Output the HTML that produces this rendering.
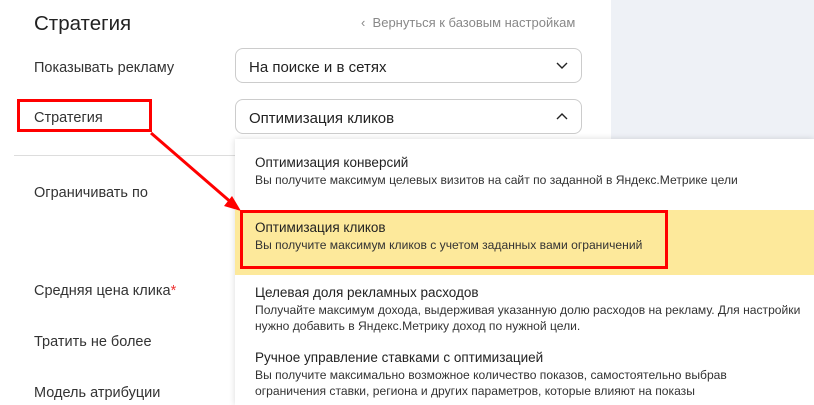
<!DOCTYPE html>
<html><head><meta charset="utf-8"><style>
*{margin:0;padding:0;box-sizing:border-box}
body{width:814px;height:405px;overflow:hidden;background:#fff;font-family:"Liberation Sans","DejaVu Sans",sans-serif;color:#222;position:relative}
.a{position:absolute;white-space:nowrap}
.lbl{font-size:14.5px;color:#333}
.sel{position:absolute;left:235px;width:347px;height:35px;border:1px solid #ccc;border-radius:8px;font-size:15px;padding:10px 0 0 13px;color:#222}
.it{position:absolute;left:255px;font-size:13.5px;color:#222}
.ds{position:absolute;left:255px;font-size:12.1px;color:#333;line-height:16px}
</style></head><body>
<div class="a" style="left:611px;top:0;width:203px;height:139px;background:#eef1f6"></div>
<div class="a" style="left:34px;top:12px;font-size:20.5px;color:#222">Стратегия</div>
<div class="a" style="left:361px;top:15px;font-size:13px;color:#888">‹&nbsp;&nbsp;Вернуться к базовым настройкам</div>
<div class="a lbl" style="left:34px;top:60px">Показывать рекламу</div>
<div class="sel" style="top:48px">На поиске и в сетях
<svg class="a" style="left:320px;top:13px" width="12" height="8"><path d="M1 1l5 5 5-5" stroke="#222" stroke-width="1.4" fill="none"/></svg></div>
<div class="a lbl" style="left:34px;top:110px">Стратегия</div>
<div class="sel" style="top:99px">Оптимизация кликов
<svg class="a" style="left:320px;top:12px" width="12" height="8"><path d="M1 7l5-5 5 5" stroke="#222" stroke-width="1.4" fill="none"/></svg></div>
<div class="a" style="left:14px;top:155px;width:222px;height:1px;background:#ddd"></div>
<div class="a lbl" style="left:34px;top:185px">Ограничивать по</div>
<div class="a lbl" style="left:34px;top:283px">Средняя цена клика<span style="color:#e33">*</span></div>
<div class="a lbl" style="left:34px;top:334px">Тратить не более</div>
<div class="a lbl" style="left:34px;top:385px">Модель атрибуции</div>
<div class="a" style="left:235px;top:139px;width:579px;height:266px;background:#fff;box-shadow:0 0 6px rgba(0,0,0,.15)"></div>
<div class="a" style="left:235px;top:210px;width:579px;height:65px;background:#fde99b"></div>
<div class="it" style="top:155px">Оптимизация конверсий</div>
<div class="ds" style="top:172px">Вы получите максимум целевых визитов на сайт по заданной в Яндекс.Метрике цели</div>
<div class="it" style="top:220px">Оптимизация кликов</div>
<div class="ds" style="top:237px">Вы получите максимум кликов с учетом заданных вами ограничений</div>
<div class="it" style="top:285px">Целевая доля рекламных расходов</div>
<div class="ds" style="top:302px">Получайте максимум дохода, выдерживая указанную долю расходов на рекламу. Для настройки<br>нужно добавить в Яндекс.Метрику доход по нужной цели.</div>
<div class="it" style="top:350px">Ручное управление ставками с оптимизацией</div>
<div class="ds" style="top:367px">Вы получите максимально возможное количество показов, самостоятельно выбрав<br>ограничения ставки, региона и других параметров, которые влияют на показы</div>
<div class="a" style="left:17px;top:99px;width:135px;height:33px;border:3px solid #f00"></div>
<div class="a" style="left:240px;top:210px;width:428px;height:59px;border:3px solid #f00"></div>
<svg class="a" style="left:0;top:0" width="814" height="405"><path d="M151 133L233 204" stroke="#f00" stroke-width="3"/><path d="M241 211L224 206L232 196Z" fill="#f00"/></svg>
</body></html>
